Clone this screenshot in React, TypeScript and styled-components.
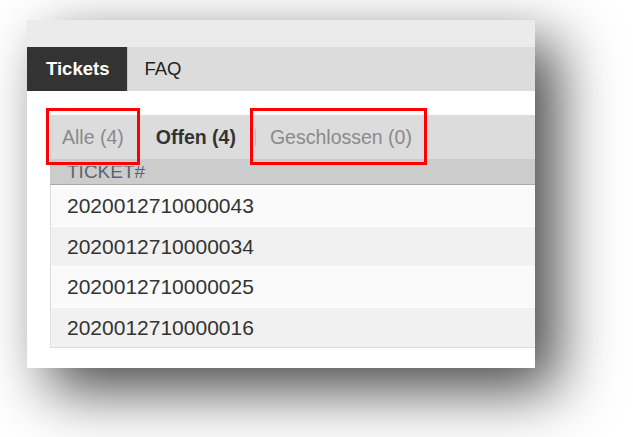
import React from 'react';
import styled, { createGlobalStyle } from 'styled-components';

const GlobalStyle = createGlobalStyle`
  html, body {
    margin: 0;
    padding: 0;
    background: #ffffff;
    font-family: "Liberation Sans", Arial, sans-serif;
  }
`;

const Page = styled.div`
  width: 633px;
  height: 437px;
  padding: 20px 0 0 27px;
  box-sizing: border-box;
  overflow: hidden;
`;

const Panel = styled.div`
  width: 508px;
  background: #ffffff;
  box-shadow: 22px 22px 56px rgba(0, 0, 0, 0.72);
`;

const TopBand = styled.div`
  height: 27px;
  background: #ebebeb;
`;

const TabBar = styled.div`
  display: flex;
  height: 44px;
  background: #dcdcdc;
`;

const Tab = styled.div<{ $active?: boolean }>`
  display: flex;
  align-items: center;
  padding-right: 18px;
  padding-left: ${(p) => (p.$active ? '19px' : '16px')};
  font-size: 18.5px;
  font-weight: ${(p) => (p.$active ? 700 : 400)};
  color: ${(p) => (p.$active ? '#ffffff' : '#222222')};
  background: ${(p) => (p.$active ? '#333333' : 'transparent')};
  border-right: ${(p) => (p.$active ? '1px solid #c8c8c8' : 'none')};
`;

const Content = styled.div`
  padding: 24px 0 20px 23px;
`;

const FilterBar = styled.div`
  position: relative;
  display: flex;
  align-items: center;
  height: 44px;
  background: #dcdcdc;
  padding-left: 12px;
`;

const Filter = styled.div<{ $active?: boolean; $flush?: boolean }>`
  font-size: 19.5px;
  line-height: 42px;
  padding-right: 16px;
  padding-left: ${(p) => (p.$flush ? '0' : '0')};
  font-weight: ${(p) => (p.$active ? 700 : 400)};
  color: ${(p) => (p.$active ? '#333333' : '#8a8a8a')};
  & + & {
    padding-left: 16px;
  }
`;

const Divider = styled.span`
  width: 1px;
  height: 17px;
  margin: 0 14px 0 3px;
  background: #bdbdbd;
`;

const Marker = styled.div<{ $left: number; $width: number }>`
  position: absolute;
  top: -7px;
  left: ${(p) => p.$left}px;
  width: ${(p) => p.$width}px;
  height: 57px;
  border: 3px solid #ff0000;
  box-sizing: border-box;
  pointer-events: none;
`;

const HeaderRow = styled.div`
  height: 18px;
  background: #cccccc;
  border-bottom: 1px solid #a9a9a9;
  padding: 7px 0 0 17px;
`;

const HeaderClip = styled.div`
  height: 13px;
  overflow: hidden;
`;

const HeaderLabel = styled.span`
  display: block;
  margin-top: -4px;
  font-size: 19px;
  line-height: 19px;
  color: #5b6470;
`;

const Body = styled.div`
  border-left: 1px solid #dddddd;
  border-bottom: 1px solid #dddddd;
`;

const Row = styled.div<{ $odd: boolean }>`
  display: flex;
  align-items: center;
  height: 39.5px;
  border-top: 1px solid #ffffff;
  padding-left: 16px;
  padding-top: 1px;
  box-sizing: border-box;
  height: 40.5px;
  background: ${(p) => (p.$odd ? '#f1f1f1' : '#fafafa')};
  font-size: 21px;
  color: #333333;
`;

const tickets = [
  '2020012710000043',
  '2020012710000034',
  '2020012710000025',
  '2020012710000016',
];

const App: React.FC = () => {
  return (
    <>
      <GlobalStyle />
      <Page>
        <Panel>
          <TopBand />
          <TabBar>
            <Tab $active>Tickets</Tab>
            <Tab>FAQ</Tab>
          </TabBar>
          <Content>
            <FilterBar>
              <Filter>Alle (4)</Filter>
              <Filter $active>Offen (4)</Filter>
              <Divider />
              <Filter $flush>Geschlossen (0)</Filter>
              <Marker $left={-4} $width={94} />
              <Marker $left={200} $width={177} />
            </FilterBar>
            <HeaderRow>
              <HeaderClip>
                <HeaderLabel>TICKET#</HeaderLabel>
              </HeaderClip>
            </HeaderRow>
            <Body>
              {tickets.map((t, i) => (
                <Row key={t} $odd={i % 2 === 1}>
                  {t}
                </Row>
              ))}
            </Body>
          </Content>
        </Panel>
      </Page>
    </>
  );
};

export default App;
